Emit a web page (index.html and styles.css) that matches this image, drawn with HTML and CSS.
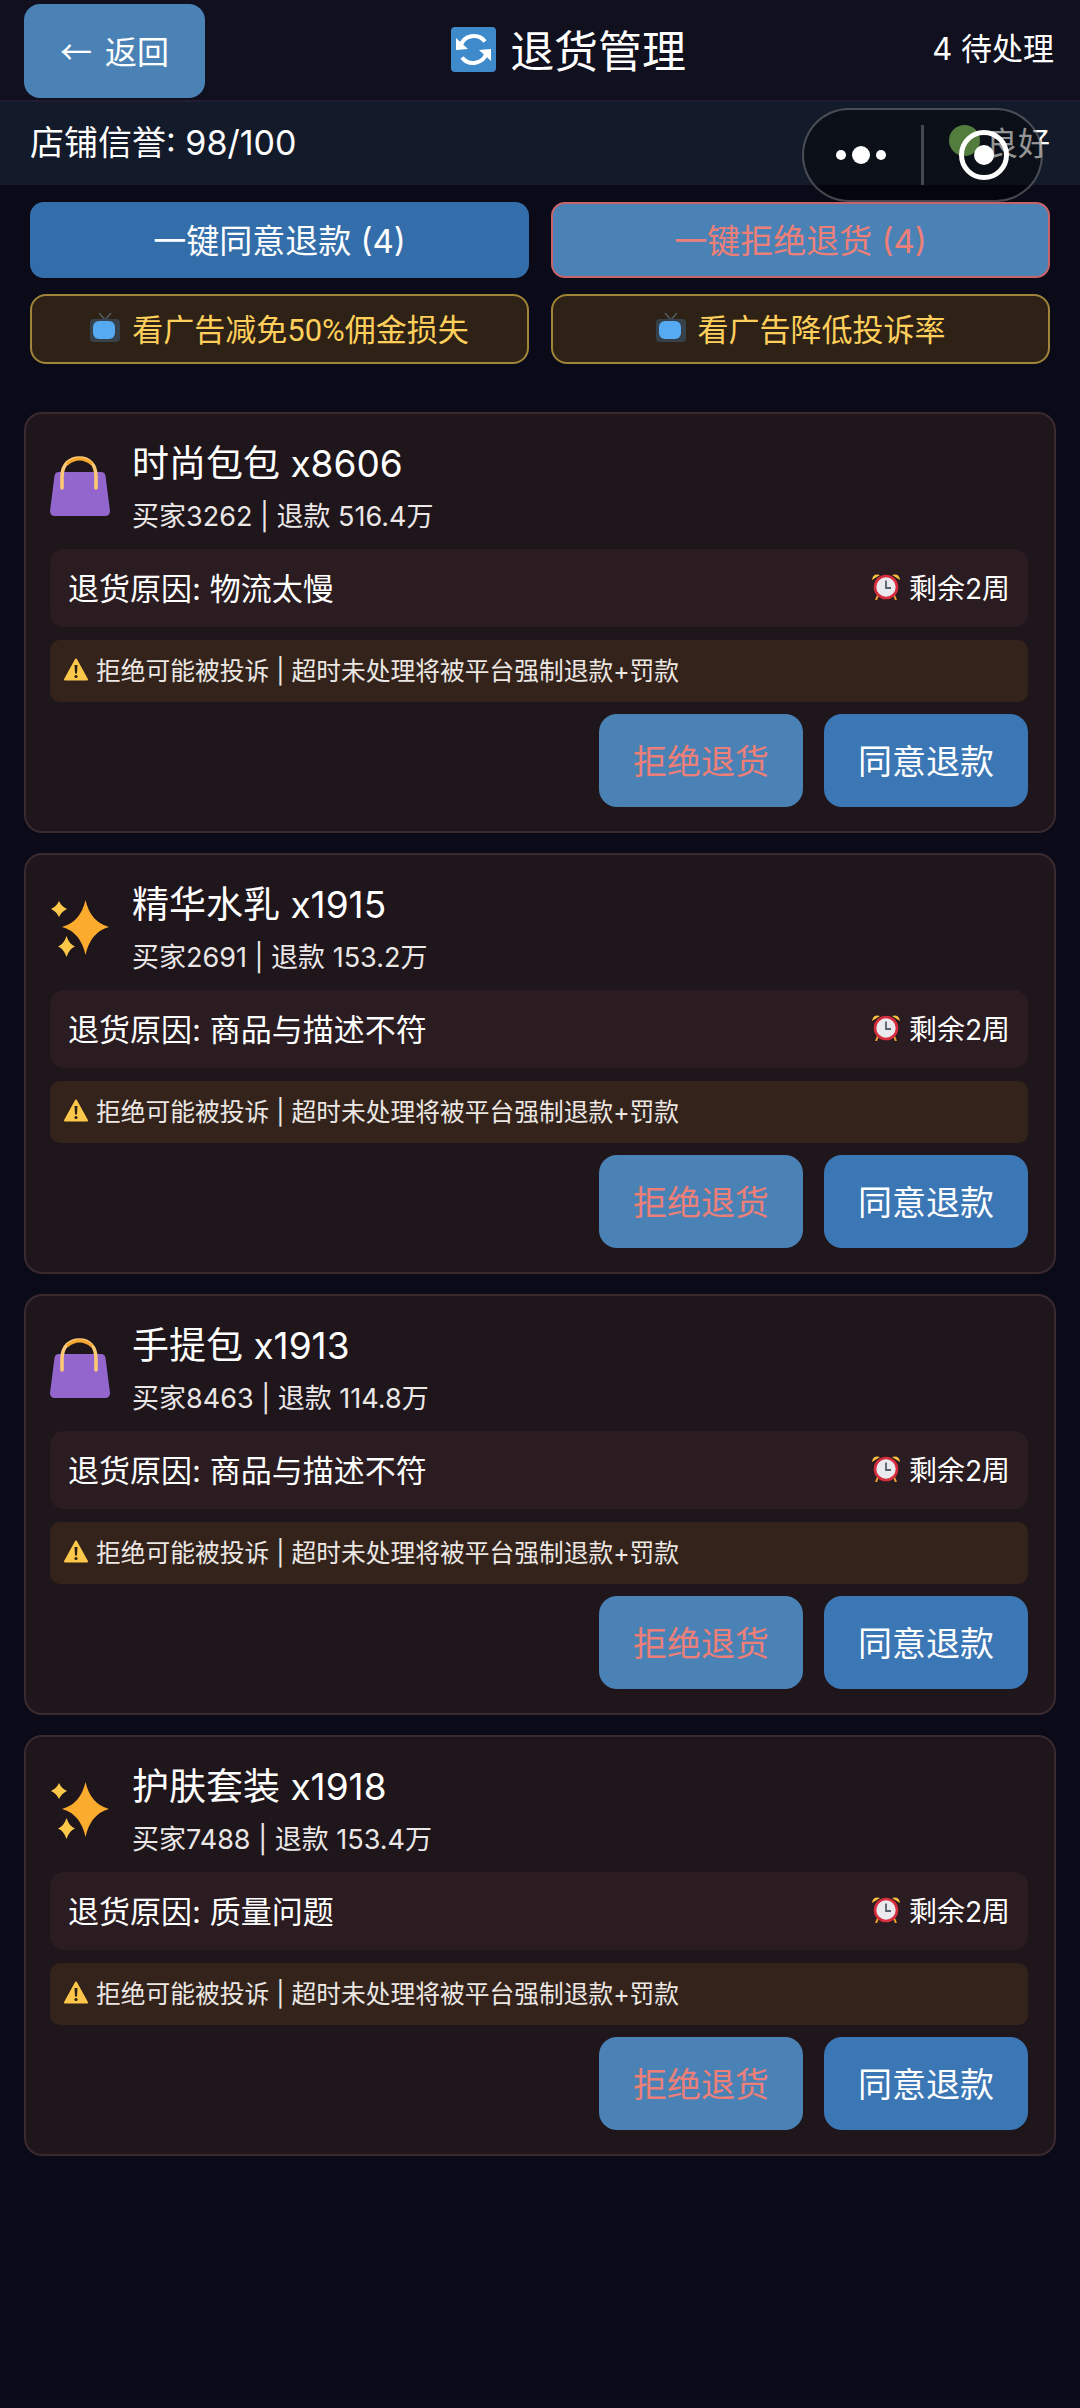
FILE: index.html
```html
<!DOCTYPE html>
<html lang="zh-CN">
<head>
  <meta charset="UTF-8" />
  <meta name="viewport" content="width=device-width, initial-scale=1.0"/>
  <title>退货管理</title>
  <link rel="stylesheet" href="styles.css">
</head>
<body>
  <svg class="defs" width="0" height="0">
    <symbol id="bag" viewBox="0 0 60 62">
      <path d="M9 17 H51 Q55 17 55.500 21 L60 56 Q60 61 55 61 H5 Q0 61 0 56 L4.500 21 Q5 17 9 17Z" fill="#9266cc"/>
      <path d="M12 33 V22 C12 9 20 3 29.500 3 C39 3 46 9 46 22 V33" fill="none" stroke="#fdc878" stroke-width="3.600" stroke-linecap="round"/>
      <path d="M17 9 Q29.500 -1 42 9" fill="none" stroke="#f4a62e" stroke-width="3"/>
    </symbol>
    <symbol id="spark" viewBox="0 0 60 62">
      <path d="M35.500 4 Q40.500 26 59 31 Q40.500 36 35.500 59 Q30.500 36 12 31 Q30.500 26 35.500 4Z" fill="#fbab2e"/>
      <path d="M9 5 Q11.500 10.500 17 13 Q11.500 15.500 9 21 Q6.500 15.500 1 13 Q6.500 10.500 9 5Z" fill="#fdc84a"/>
      <path d="M16.500 40 Q19 48 25 50.500 Q19 53 16.500 61 Q14 53 8 50.500 Q14 48 16.500 40Z" fill="#fdc84a"/>
    </symbol>
    <symbol id="tv" viewBox="0 0 30 29">
      <path d="M9 0 L15 7 L21 0" fill="none" stroke="#55606a" stroke-width="1.400"/>
      <rect x="0" y="6" width="30" height="23" rx="4" fill="#37414b"/>
      <rect x="3" y="8" width="22" height="18" rx="6" fill="#55aaf2"/>
    </symbol>
    <symbol id="warn" viewBox="0 0 24 23">
      <path d="M12 1.500 L23 21.500 H1Z" fill="#fdc84a" stroke="#fdc84a" stroke-width="2" stroke-linejoin="round"/>
      <path d="M10.500 7 H13.500 L13 15.500 H11Z" fill="#2b2016"/>
      <circle cx="12" cy="18.500" r="1.600" fill="#2b2016"/>
    </symbol>
    <symbol id="clock" viewBox="0 0 30 27">
      <path d="M1 7 Q2 0 9 2Z M29 7 Q28 0 21 2Z" fill="#fcc23e"/>
      <path d="M7 22 L5 27 M23 22 L25 27" stroke="#f0a030" stroke-width="2"/>
      <circle cx="15" cy="14" r="11" fill="#e9e9ee" stroke="#d62e3e" stroke-width="2.600"/>
      <path d="M15 7.500 V15 H20" fill="none" stroke="#55606a" stroke-width="1.800"/>
    </symbol>
  </svg>

  <header class="topbar">
    <button class="back-btn"><span class="arrow">←</span> 返回</button>
    <h1 class="page-title">
      <svg class="title-icon" viewBox="0 0 45 45">
        <rect width="45" height="45" rx="4" fill="#3f8acb"/>
        <path d="M9.500 19 A14 14 0 0 1 34 14.500 M35.500 26 A14 14 0 0 1 11 30.500" fill="none" stroke="#fff" stroke-width="4"/>
        <path d="M5 11 L17 22 L5 23Z M40 34 L28 23 L40 22Z" fill="#fff"/>
      </svg>
      退货管理
    </h1>
    <span class="pending">4 待处理</span>
  </header>

  <section class="status">
    <span class="score">店铺信誉: 98/100</span>
    <span class="state"><i class="dot"></i>良好</span>
  </section>

  <section class="bulk">
    <button class="bulk-btn agree">一键同意退款 (4)</button>
    <button class="bulk-btn reject">一键拒绝退货 (4)</button>
    <button class="ad-btn"><svg class="tv"><use href="#tv"/></svg>看广告减免50%佣金损失</button>
    <button class="ad-btn"><svg class="tv"><use href="#tv"/></svg>看广告降低投诉率</button>
  </section>

  <main class="list">
    <article class="card">
      <div class="item">
        <svg class="thumb"><use href="#bag"/></svg>
        <div>
          <h2 class="name">时尚包包 x8606</h2>
          <p class="meta">买家3262 | 退款 516.4万</p>
        </div>
      </div>
      <div class="reason">
        <span>退货原因: 物流太慢</span>
        <span class="left"><svg class="clock"><use href="#clock"/></svg>剩余2周</span>
      </div>
      <p class="warning"><svg class="warn"><use href="#warn"/></svg>拒绝可能被投诉 | 超时未处理将被平台强制退款+罚款</p>
      <div class="actions">
        <button class="act reject-act">拒绝退货</button>
        <button class="act agree-act">同意退款</button>
      </div>
    </article>

    <article class="card">
      <div class="item">
        <svg class="thumb"><use href="#spark"/></svg>
        <div>
          <h2 class="name">精华水乳 x1915</h2>
          <p class="meta">买家2691 | 退款 153.2万</p>
        </div>
      </div>
      <div class="reason">
        <span>退货原因: 商品与描述不符</span>
        <span class="left"><svg class="clock"><use href="#clock"/></svg>剩余2周</span>
      </div>
      <p class="warning"><svg class="warn"><use href="#warn"/></svg>拒绝可能被投诉 | 超时未处理将被平台强制退款+罚款</p>
      <div class="actions">
        <button class="act reject-act">拒绝退货</button>
        <button class="act agree-act">同意退款</button>
      </div>
    </article>

    <article class="card">
      <div class="item">
        <svg class="thumb"><use href="#bag"/></svg>
        <div>
          <h2 class="name">手提包 x1913</h2>
          <p class="meta">买家8463 | 退款 114.8万</p>
        </div>
      </div>
      <div class="reason">
        <span>退货原因: 商品与描述不符</span>
        <span class="left"><svg class="clock"><use href="#clock"/></svg>剩余2周</span>
      </div>
      <p class="warning"><svg class="warn"><use href="#warn"/></svg>拒绝可能被投诉 | 超时未处理将被平台强制退款+罚款</p>
      <div class="actions">
        <button class="act reject-act">拒绝退货</button>
        <button class="act agree-act">同意退款</button>
      </div>
    </article>

    <article class="card">
      <div class="item">
        <svg class="thumb"><use href="#spark"/></svg>
        <div>
          <h2 class="name">护肤套装 x1918</h2>
          <p class="meta">买家7488 | 退款 153.4万</p>
        </div>
      </div>
      <div class="reason">
        <span>退货原因: 质量问题</span>
        <span class="left"><svg class="clock"><use href="#clock"/></svg>剩余2周</span>
      </div>
      <p class="warning"><svg class="warn"><use href="#warn"/></svg>拒绝可能被投诉 | 超时未处理将被平台强制退款+罚款</p>
      <div class="actions">
        <button class="act reject-act">拒绝退货</button>
        <button class="act agree-act">同意退款</button>
      </div>
    </article>
  </main>

  <!-- mini program capsule, sits over the page -->
  <div class="capsule">
    <div class="cap-more"><i></i><i class="big"></i><i></i></div>
    <div class="cap-line"></div>
    <div class="cap-close"><i></i></div>
  </div>
</body>
</html>
```

FILE: styles.css
```css
* {
  box-sizing: border-box;
}
html, body {
  height: 100%;
}
body {
  margin: 0;
  background-color: #0a0a18;
  color: #fff;
  font-family: Inter, "Noto Sans CJK SC", sans-serif;
  overflow: hidden;
}
button {
  font-family: inherit;
  border: none;
  color: #fff;
  padding: 0;
}
h1, h2, p {
  margin: 0;
  font-weight: 400;
}
.defs {
  position: absolute;
}
.topbar {
  height: 102px;
  padding: 4px 26px 4px 24px;
  display: flex;
  align-items: flex-start;
  justify-content: space-between;
  background-color: #10101e;
  border-bottom: 2px solid #231b36;
}
.back-btn {
  width: 181px;
  height: 94px;
  padding-bottom: 2px;
  background-color: #4a82b5;
  border-radius: 16px;
  font-size: 32px;
}
.arrow {
  font-family: "Noto Sans CJK SC", sans-serif;
  margin-right: 4px;
}
.page-title {
  display: flex;
  align-items: center;
  gap: 14px;
  height: 94px;
  padding-bottom: 4px;
  font-size: 44px;
}
.title-icon {
  width: 45px;
  height: 45px;
}
.pending {
  height: 94px;
  line-height: 90px;
  font-size: 31px;
}
.status {
  height: 83px;
  padding: 0 30px;
  display: flex;
  align-items: center;
  justify-content: space-between;
  background-color: #131a2a;
  font-size: 34px;
}
.score {
  margin-top: -6px;
}
.state {
  display: flex;
  align-items: center;
  gap: 6px;
  font-size: 32px;
  margin-top: -6px;
}
.dot {
  width: 31px;
  height: 31px;
  border-radius: 50%;
  background-color: #8fd868;
}
.bulk {
  padding: 17px 30px 0;
  display: grid;
  grid-template-columns: 1fr 1fr;
  column-gap: 22px;
  row-gap: 16px;
}
.bulk-btn {
  height: 76px;
  padding-bottom: 2px;
  border-radius: 14px;
  font-size: 33px;
}
.bulk-btn.agree {
  background-color: #336eaa;
}
.bulk-btn.reject {
  background-color: #4a82b5;
  color: #ee7f78;
  border: 2px solid #c9636a;
}
.ad-btn {
  height: 70px;
  padding-bottom: 3px;
  border-radius: 16px;
  background-color: #2d2215;
  border: 2px solid #a08438;
  color: #ffcf5c;
  font-family: Roboto, "Noto Sans CJK SC", sans-serif;
  font-size: 31px;
  display: flex;
  align-items: center;
  justify-content: center;
  gap: 12px;
}
.tv {
  width: 30px;
  height: 29px;
}
.list {
  padding: 48px 24px 0;
  display: flex;
  flex-direction: column;
  gap: 20px;
}
.card {
  height: 421px;
  padding: 22px 26px 0 24px;
  background-color: #1f161c;
  border: 2px solid #3a2a2e;
  border-radius: 18px;
}
.item {
  display: flex;
  align-items: center;
  gap: 22px;
  height: 113px;
  padding-bottom: 8px;
}
.thumb {
  width: 60px;
  height: 62px;
  flex: none;
  margin-top: -5px;
}
.name {
  font-size: 37px;
  line-height: 54px;
}
.meta {
  margin-top: 3px;
  font-size: 27px;
  line-height: 46px;
  color: #ebe7e7;
}
.reason {
  height: 78px;
  padding: 0 18px 3px;
  display: flex;
  align-items: center;
  justify-content: space-between;
  background-color: #2a1c20;
  border-radius: 14px;
  font-size: 31px;
}
.left {
  display: flex;
  align-items: center;
  gap: 8px;
  font-size: 28px;
}
.clock {
  width: 30px;
  height: 27px;
}
.warning {
  height: 62px;
  margin-top: 13px;
  padding: 0 14px 4px;
  display: flex;
  align-items: center;
  gap: 8px;
  background-color: #33231b;
  border-radius: 10px;
  font-size: 24.750px;
  color: #ece7e3;
}
.warn {
  width: 24px;
  height: 23px;
}
.actions {
  margin-top: 12px;
  display: flex;
  justify-content: flex-end;
  gap: 21px;
}
.act {
  width: 204px;
  height: 93px;
  padding-bottom: 2px;
  border-radius: 18px;
  font-size: 34px;
}
.reject-act {
  background-color: #4a82b5;
  color: #ee7f78;
}
.agree-act {
  background-color: #3b76b5;
}
.capsule {
  position: absolute;
  left: 802px;
  top: 108px;
  width: 241px;
  height: 94px;
  display: flex;
  align-items: center;
  background-color: rgba(0, 0, 0, 0.42);
  border: 2px solid rgba(255, 255, 255, 0.26);
  border-radius: 47px;
}
.cap-more {
  width: 114px;
  margin-right: 3px;
  display: flex;
  align-items: center;
  justify-content: center;
  gap: 6px;
}
.cap-more i {
  width: 10px;
  height: 10px;
  border-radius: 50%;
  background-color: #fff;
}
.cap-more i.big {
  width: 18px;
  height: 18px;
}
.cap-line {
  width: 3px;
  height: 60px;
  background-color: rgba(255, 255, 255, 0.24);
}
.cap-close {
  margin-left: 35px;
  width: 50px;
  height: 50px;
  border: 5px solid #fff;
  border-radius: 50%;
  display: flex;
  align-items: center;
  justify-content: center;
}
.cap-close i {
  width: 20px;
  height: 20px;
  border-radius: 50%;
  background-color: #fff;
}
```
